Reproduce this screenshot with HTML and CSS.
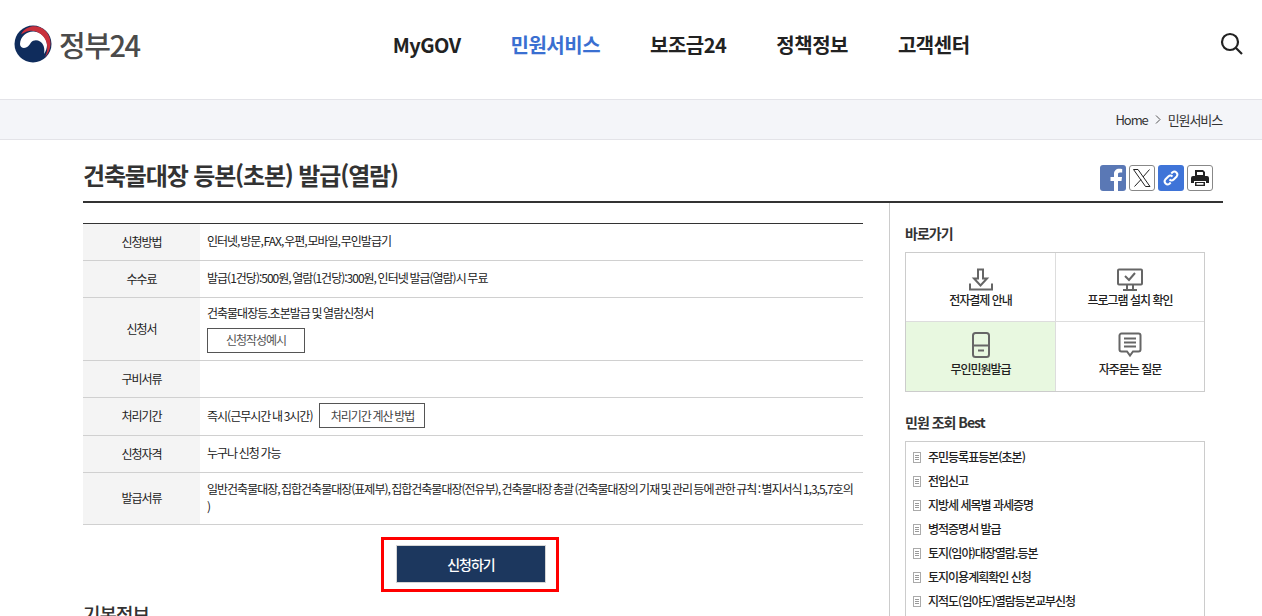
FILE: index.html
```html
<!DOCTYPE html>
<html lang="ko">
<head>
    <meta charset="UTF-8">
    <meta name="viewport" content="width=device-width, initial-scale=1.0">
    <title>건축물대장 등본(초본) 발급(열람)</title>
    <link rel="stylesheet" href="styles.css">
</head>
<body>
    <header class="site-header">
        <a class="logo" href="#">
            <svg width="38" height="38" viewBox="0 0 38 38">
                <circle cx="19" cy="19" r="18.500" fill="#0f2c5c"/>
                <path d="M6 19C6.500 11 13 6 20 6.500C27 7 33 13 33 20C33 23 32 26 30 29C31 24 30 19 26 16.500C23 14.500 19 15 17 17.500C15 20.500 13 23 10 23C8 23 6 21.500 6 19z" fill="#fff"/>
                <path d="M7 9.500C10 3 17 .5 23 1.500C31 3 36.500 10 36.500 18C36.500 24 34 29 31 32C34 26 34 19 31 14C27.500 8 21 5 15 6C12 6.500 9 8 7 9.500z" fill="#c9303c"/>
            </svg>
            <span class="logo-text">정부24</span>
        </a>
        <nav class="main-nav">
            <a href="#">MyGOV</a>
            <a href="#" class="active">민원서비스</a>
            <a href="#">보조금24</a>
            <a href="#">정책정보</a>
            <a href="#">고객센터</a>
        </nav>
        <a class="search-btn" href="#" aria-label="검색">
            <svg width="24" height="24" viewBox="0 0 24 24" fill="none" stroke="#222" stroke-width="2.200">
                <circle cx="10" cy="10" r="8"/>
                <path d="M16 16l6 6"/>
            </svg>
        </a>
    </header>

    <div class="breadcrumb">
        <div class="breadcrumb-inner">
            <span>Home</span>
            <svg width="6" height="9" viewBox="0 0 6 9" fill="none" stroke="#555"><path d="M1 .5l4 4-4 4"/></svg>
            <span>민원서비스</span>
        </div>
    </div>

    <main class="container">
        <div class="title-bar">
            <h1>건축물대장 등본(초본) 발급(열람)</h1>
            <div class="share">
                <a class="share-btn fb" href="#"><svg width="26" height="26" viewBox="0 0 26 26"><path d="M18 26V16h3.500l.5-4h-4V9.500c0-1.200.4-2 2-2h2.200V4c-.5 0-1.700-.2-3-.2-3.200 0-5.200 1.900-5.200 5.300V12h-3.500v4H14v10z" fill="#fff"/></svg></a>
                <a class="share-btn plain" href="#"><svg width="20" height="20" viewBox="0 0 20 20" fill="none" stroke="#222"><path d="M1.500 1.500h4.500l12 17h-4.500zM17.500 1.500L11 9M9 11.500l-6.500 7"/></svg></a>
                <a class="share-btn link" href="#"><svg width="20" height="20" viewBox="0 0 20 20" fill="none" stroke="#fff" stroke-width="2"><path d="M8.500 11.500a3 3 0 0 0 4.200 0l3-3a3 3 0 0 0-4.200-4.200l-1.200 1.200"/><path d="M11.500 8.500a3 3 0 0 0-4.200 0l-3 3a3 3 0 0 0 4.200 4.200l1.200-1.200"/></svg></a>
                <a class="share-btn plain" href="#"><svg width="20" height="20" viewBox="0 0 20 20"><path d="M5 2h8l2 2v4H5zM7 4v3h6V4.500L12.500 4z" fill="#222" fill-rule="evenodd"/><path d="M3 8h14a2 2 0 0 1 2 2v5h-3v-2H4v2H1v-5a2 2 0 0 1 2-2z" fill="#222"/><path d="M5 14h10v4H5z" fill="#222"/><path d="M6.500 15h7v1.800h-7z" fill="#fff"/></svg></a>
            </div>
        </div>

        <div class="content">
            <div class="main-col">
                <table class="info-table">
                    <tr class="row-a">
                        <th>신청방법</th>
                        <td class="tight">인터넷, 방문, FAX, 우편, 모바일, 무인발급기</td>
                    </tr>
                    <tr class="row-a">
                        <th>수수료</th>
                        <td>발급(1건당):500원, 열람(1건당):300원, 인터넷 발급(열람)시 무료</td>
                    </tr>
                    <tr class="row-form">
                        <th>신청서</th>
                        <td>
                            <div>건축물대장등.초본발급 및 열람신청서</div>
                            <a class="btn-line btn-sample" href="#">신청작성예시</a>
                        </td>
                    </tr>
                    <tr class="row-a">
                        <th>구비서류</th>
                        <td></td>
                    </tr>
                    <tr class="row-b">
                        <th>처리기간</th>
                        <td>
                            <div class="inline-row">
                                <span>즉시(근무시간 내 3시간)</span>
                                <a class="btn-line btn-calc" href="#">처리기간 계산 방법</a>
                            </div>
                        </td>
                    </tr>
                    <tr class="row-a">
                        <th>신청자격</th>
                        <td>누구나 신청 가능</td>
                    </tr>
                    <tr class="row-c">
                        <th>발급서류</th>
                        <td class="docs">일반건축물대장, 집합건축물대장(표제부), 집합건축물대장(전유부), 건축물대장 총괄 (건축물대장의 기재 및 관리 등에 관한 규칙 : 별지서식 1,3,5,7호의<br>)</td>
                    </tr>
                </table>

                <div class="apply-wrap">
                    <div class="apply-mark">
                        <a class="apply-btn" href="#">신청하기</a>
                    </div>
                </div>

                <h2 class="section-title">기본정보</h2>
            </div>

            <aside class="side-col">
                <h3>바로가기</h3>
                <div class="quick-grid">
                    <a class="quick-item" href="#">
                        <svg width="26" height="24" viewBox="0 0 26 24" fill="none" stroke="#666" stroke-width="2"><path d="M10 1.500h5v9h4l-6.500 7-6.500-7h4z"/><path d="M2 15.500v6h22v-6"/></svg>
                        <span>전자결제 안내</span>
                    </a>
                    <a class="quick-item" href="#">
                        <svg width="28" height="24" viewBox="0 0 28 24" fill="none" stroke="#666" stroke-width="2"><rect x="2" y="1.500" width="24" height="15" rx="1"/><path d="M9 8l4 4 6-7M11 17v4M17 17v4M7 22h14"/></svg>
                        <span>프로그램 설치 확인</span>
                    </a>
                    <a class="quick-item on" href="#">
                        <svg width="20" height="26" viewBox="0 0 20 26" fill="none" stroke="#666" stroke-width="2"><rect x="2" y="1" width="16" height="24" rx="2.500"/><path d="M2 13.500h16M7 18.500h6"/></svg>
                        <span>무인민원발급</span>
                    </a>
                    <a class="quick-item" href="#">
                        <svg width="24" height="26" viewBox="0 0 24 26" fill="none" stroke="#666" stroke-width="2"><path d="M3.500 1.500h17a2 2 0 0 1 2 2v14a2 2 0 0 1-2 2H15l-3 4-3-4H3.500a2 2 0 0 1-2-2v-14a2 2 0 0 1 2-2z"/><path d="M6 6.500h12M6 10.500h12M6 14.500h12"/></svg>
                        <span>자주묻는 질문</span>
                    </a>
                </div>

                <h3 class="best-title">민원 조회 Best</h3>
                <ul class="best-list">
                    <li><a href="#">주민등록표등본(초본)</a></li>
                    <li><a href="#">전입신고</a></li>
                    <li><a href="#">지방세 세목별 과세증명</a></li>
                    <li><a href="#">병적증명서 발급</a></li>
                    <li><a href="#">토지(임야)대장열람.등본</a></li>
                    <li><a href="#">토지이용계획확인 신청</a></li>
                    <li><a href="#">지적도(임야도)열람등본교부신청</a></li>
                </ul>
            </aside>
        </div>
    </main>
</body>
</html>
```

FILE: styles.css
```css
/* Global Styles */
html, body {
    height: 616px;
    overflow: hidden;
}

body {
    margin: 0;
    padding: 0;
    background: #fff;
    color: #222;
    font-family: "Noto Sans CJK KR", "Noto Sans", sans-serif;
    font-size: 12px;
    letter-spacing: -1px;
}

a {
    color: inherit;
    text-decoration: none;
}

/* Header */
.site-header {
    display: flex;
    align-items: center;
    height: 99px;
    padding: 0 18px 12px 14px;
    box-sizing: border-box;
}

.logo {
    display: flex;
    align-items: center;
    gap: 7px;
}

.logo-text {
    font-size: 29px;
    line-height: 38px;
    font-weight: 500;
    color: #4b4b4b;
    letter-spacing: -0.05em;
}

.main-nav {
    display: flex;
    gap: 50px;
    margin: 2px 0 0 253px;
}

.main-nav a {
    font-size: 20px;
    font-weight: 700;
    color: #222;
    letter-spacing: -0.025em;
}

.main-nav a.active {
    color: #3a6fd1;
}

.search-btn {
    display: flex;
    margin-left: auto;
}

/* Breadcrumb */
.breadcrumb {
    height: 39px;
    background: #f4f5f9;
    border-top: 1px solid #e3e3e8;
    border-bottom: 1px solid #e3e3e8;
}

.breadcrumb-inner {
    display: flex;
    align-items: center;
    justify-content: flex-end;
    gap: 7px;
    height: 100%;
    width: 1139px;
    margin-left: 83px;
    font-size: 13px;
    letter-spacing: -1.1px;
    color: #333;
}

/* Page container */
.container {
    width: 1140px;
    margin-left: 83px;
}

.title-bar {
    display: flex;
    align-items: center;
    justify-content: space-between;
    height: 53px;
    padding: 8px 10px 0 0;
    border-bottom: 2px solid #333;
}

.title-bar h1 {
    margin: 0;
    font-size: 24px;
    font-weight: 700;
    color: #333;
    letter-spacing: -1.15px;
}

.share {
    display: flex;
    gap: 3px;
    padding-top: 7px;
}

.share-btn {
    display: flex;
    align-items: center;
    justify-content: center;
    width: 26px;
    height: 26px;
    border-radius: 3px;
    box-sizing: border-box;
    overflow: hidden;
}

.share-btn.fb {
    background: #5a78b5;
}

.share-btn.link {
    background: #3f74d8;
}

.share-btn.plain {
    border: 1px solid #888;
    background: #fff;
}

.content {
    display: flex;
}

.main-col {
    width: 780px;
    padding-top: 20px;
}

/* Info table */
.info-table {
    width: 100%;
    border-collapse: collapse;
    border-top: 1px solid #333;
    border-bottom: 1px solid #333;
    word-spacing: -0.7px;
}

.info-table tr {
    border-bottom: 1px solid #d0d0d0;
}

.info-table th {
    width: 117px;
    background: #f4f4f4;
    font-weight: 400;
    text-align: center;
    padding: 0 0 2px;
}

.info-table td {
    padding: 0 7px 2px;
    line-height: 18px;
}

.info-table td.tight {
    word-spacing: -1.5px;
}

.info-table td.docs {
    word-spacing: -1px;
}

.row-a {
    height: 37px;
}

.row-b {
    height: 38px;
}

.row-c {
    height: 52px;
}

.row-form {
    height: 63px;
}

.btn-line {
    display: flex;
    align-items: center;
    justify-content: center;
    height: 25px;
    box-sizing: border-box;
    border: 1px solid #555;
    background: #fff;
    color: #444;
}

.btn-sample {
    width: 98px;
    margin-top: 6px;
    color: #555;
}

.btn-calc {
    width: 106px;
}

.inline-row {
    display: flex;
    align-items: center;
    gap: 7px;
}

/* Apply button */
.apply-wrap {
    display: flex;
    justify-content: center;
    margin-top: 12px;
    padding-right: 6px;
}

.apply-mark {
    padding: 5px 10px 6px 12px;
    border: 3px solid #f00;
}

.apply-btn {
    display: flex;
    align-items: center;
    justify-content: center;
    width: 148px;
    height: 36px;
    background: #1c375e;
    border: 1px solid #d5d5d5;
    color: #fff;
    font-size: 14px;
    font-weight: 500;
}

.section-title {
    margin: 8px 0 0;
    font-size: 19px;
    font-weight: 500;
    line-height: 28px;
    color: #333;
}

/* Sidebar */
.side-col {
    width: 318px;
    height: 500px;
    margin-left: 26px;
    padding: 20px 0 0 15px;
    box-sizing: border-box;
    border-left: 1px solid #ccc;
}

.side-col h3 {
    margin: 0 0 9px;
    font-size: 14px;
    line-height: 20px;
    font-weight: 700;
    color: #333;
}

.quick-grid {
    display: grid;
    grid-template-columns: 150px 148px;
    grid-template-rows: 69px 69px;
    width: 300px;
    box-sizing: border-box;
    border: 1px solid #ccc;
}

.quick-item {
    display: flex;
    flex-direction: column;
    align-items: center;
    padding-top: 15px;
    box-sizing: border-box;
    font-weight: 500;
    line-height: 16px;
    border-right: 1px solid #ddd;
    border-bottom: 1px solid #ddd;
}

.quick-item:nth-child(2n) {
    border-right: 0;
}

.quick-item:nth-child(n+3) {
    gap: 3px;
    padding-top: 10px;
    border-bottom: 0;
}

.quick-item.on {
    background: #e8f8e0;
}

.side-col .best-title {
    margin-top: 20px;
}

.best-list {
    width: 300px;
    box-sizing: border-box;
    margin: 0;
    padding: 3px 7px 40px;
    list-style: none;
    border: 1px solid #ccc;
}

.best-list li {
    position: relative;
    height: 24px;
    line-height: 24px;
    padding-left: 15px;
    font-weight: 500;
}

/* small document mark before each item */
.best-list li::before {
    content: "";
    position: absolute;
    left: 0;
    top: 7px;
    width: 8px;
    height: 11px;
    border: 1px solid #aaa;
    background: repeating-linear-gradient(#999 0 1px, #fff 1px 2px);
    background-clip: content-box;
    padding: 1px;
    box-sizing: border-box;
}
```
